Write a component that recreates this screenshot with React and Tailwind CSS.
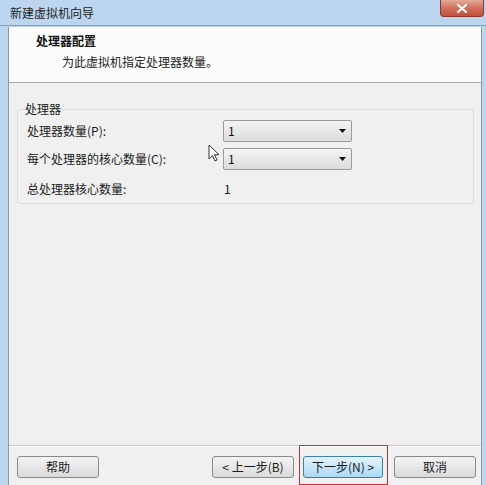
import React from 'react';

const font = { fontFamily: '"Noto Sans CJK SC", "Liberation Sans", sans-serif' };

function Combo({ value }) {
  return (
    <div className="relative flex h-[22px] w-[129px] items-center rounded-[2px] border border-[#9a9a9a] bg-gradient-to-b from-[#f4f4f4] to-[#dcdcdc] pl-[4px] text-[12px] text-[#111]">
      <span>{value}</span>
      <svg className="absolute right-[5px] top-[8px]" width="7" height="4" viewBox="0 0 7 4">
        <path d="M0 0h7L3.5 4z" fill="#111" />
      </svg>
    </div>
  );
}

function Btn({ children, blue }) {
  return (
    <button
      className={`flex h-[22px] items-center justify-center rounded-[3px] border text-[12px] text-[#1a1a1a] ${
        blue
          ? 'w-[80px] border-[#3c7fb1] bg-gradient-to-b from-[#e5f4fc] to-[#a9d9f5]'
          : 'w-[82px] border-[#8a8a8a] bg-gradient-to-b from-[#f4f4f4] to-[#dadada]'
      }`}
    >
      {children}
    </button>
  );
}

export default function App() {
  return (
    <div className="flex h-[485px] w-[486px] flex-col overflow-hidden bg-[#bcd6f0]" style={font}>
      {/* title bar */}
      <div className="flex h-[26px] shrink-0 items-start justify-between border-b border-[#8d9cac]">
        <span className="ml-[10px] mt-[5px] text-[12px] leading-[16px] text-[#222]">新建虚拟机向导</span>
        <div className="mr-[2px] flex h-[17px] w-[44px] items-center justify-center rounded-b-[4px] border border-t-0 border-[#8a3a2e] bg-gradient-to-b from-[#e7aa9a] via-[#d0705c] to-[#c4503a]">
          <svg width="10" height="9" viewBox="0 0 10 9">
            <path d="M1 1l8 7M9 1L1 8" stroke="#fff" strokeWidth="2.2" strokeLinecap="round" />
          </svg>
        </div>
      </div>

      {/* body */}
      <div className="ml-[8px] mr-[4px] mt-px flex flex-1 flex-col border-x border-[#8b98a8] bg-[#f0f0f0]">
        <div className="h-[56px] shrink-0 border-b border-[#a9a9a9] bg-[#fcfcfc] pl-[27px] pt-[6px]">
          <div className="text-[12px] font-bold leading-[16px] text-[#111]">处理器配置</div>
          <div className="mt-[5px] pl-[26px] text-[12px] leading-[16px] text-[#222]">为此虚拟机指定处理器数量。</div>
        </div>

        <div className="relative flex-1">
          <div className="ml-[8px] mr-[7px] mt-[26px] h-[95px] rounded-[3px] border border-[#dddddd]">
            <div className="-mt-[9px] ml-[7px] w-fit text-[12px] leading-[16px] text-[#1a1a1a]">处理器</div>
            <div className="mt-[3px] grid grid-cols-[196px_auto] items-center gap-y-[6px] pl-[9px] text-[12px] text-[#1a1a1a]">
              <span>处理器数量(P):</span>
              <Combo value="1" />
              <span>每个处理器的核心数量(C):</span>
              <Combo value="1" />
              <span className="mt-[4px]">总处理器核心数量:</span>
              <span className="mt-[4px] pl-[1px]">1</span>
            </div>
          </div>
          {/* mouse cursor */}
          <svg className="absolute left-[199px] top-[61px]" width="12" height="18" viewBox="0 0 12 18">
            <path d="M1 1v14l3.5-3.5 2.5 5.5 2-1-2.5-5.3H11z" fill="#fff" stroke="#333" strokeWidth="1" strokeLinejoin="round" />
          </svg>
        </div>

        <div className="relative h-[40px] shrink-0 border-t border-[#c8c8c8] shadow-[inset_0_1px_0_#ffffff]">
          <div className="flex pl-[8px] pr-[5px] pt-[10px]">
            <Btn>帮助</Btn>
            <div className="ml-auto flex">
              <Btn>&lt; 上一步(B)</Btn>
              <div className="ml-[9px]">
                <Btn blue>下一步(N) &gt;</Btn>
              </div>
              <div className="ml-[11px]">
                <Btn>取消</Btn>
              </div>
            </div>
          </div>
          <div className="absolute left-[290px] top-[-1px] h-[40px] w-[89px] border-[1.5px] border-[#d42a2a]" />
        </div>
      </div>
    </div>
  );
}
